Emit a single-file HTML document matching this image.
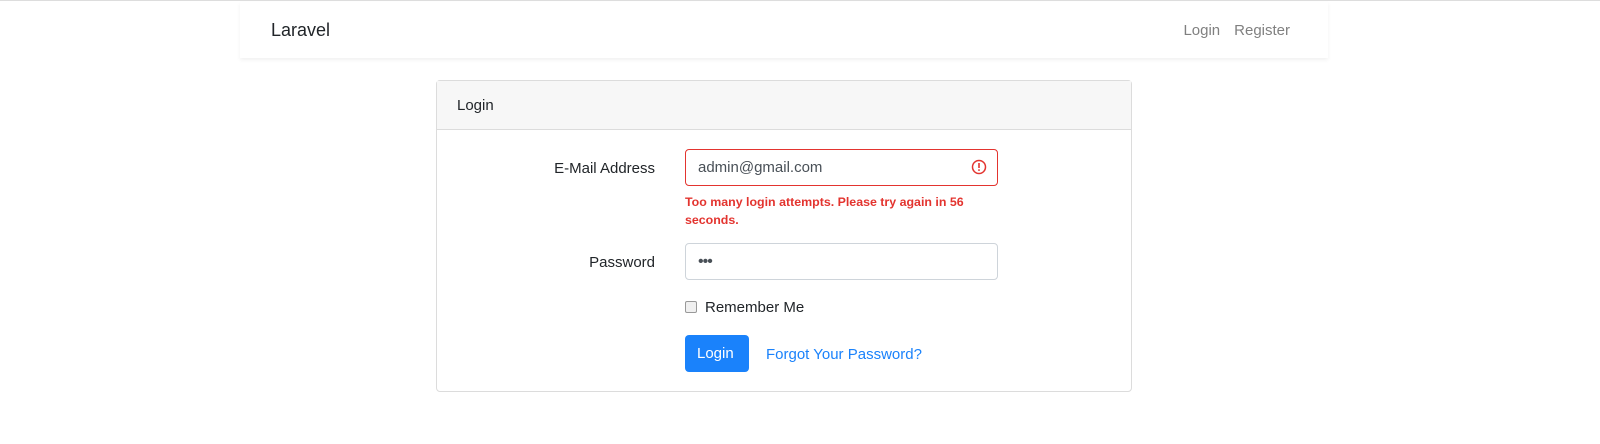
<!DOCTYPE html>
<html><head><style>
*{box-sizing:border-box;margin:0;padding:0}
body{width:1600px;height:444px;background:#fff;font-family:"Liberation Sans",sans-serif;color:#212529;position:relative;overflow:hidden;border-top:1px solid #ddd}
.nav{position:absolute;left:240px;top:1px;width:1088px;height:56px;background:#fff;box-shadow:0 2px 4px rgba(0,0,0,.06)}
.brand{position:absolute;left:31px;top:18px;font-size:18px;color:#212529}
.links{position:absolute;right:38px;top:20px;font-size:15px;color:#808080}
.links span{margin-left:14px}
.card{position:absolute;left:436px;top:79px;width:696px;height:312px;border:1px solid #dcdcdc;border-radius:4px}
.ch{height:49px;background:#f7f7f7;border-bottom:1px solid #dcdcdc;padding:16px 20px;font-size:15px}
.lbl{position:absolute;right:476px;font-size:15px;text-align:right}
.inp{position:absolute;left:248px;width:313px;height:37px;border:1px solid #ced4da;border-radius:4px;padding:9px 12px 0;font-size:15px;color:#495057}
.err{border-color:#e3342f}
.msg{position:absolute;left:248px;top:112px;width:300px;font-size:12.4px;font-weight:bold;color:#e3342f;line-height:18px}
.btn{position:absolute;left:248px;top:254px;width:64px;height:37px;background:#1a82fb;border-radius:4px;color:#fff;font-size:15px;padding:10px 12px 0}
</style></head><body>
<div class="nav"><div class="brand">Laravel</div><div class="links"><span>Login</span><span>Register</span></div></div>
<div class="card">
<div class="ch">Login</div>
<div class="lbl" style="top:79px">E-Mail Address</div>
<div class="inp err" style="top:68px">admin@gmail.com
<svg width="16" height="16" viewBox="0 0 16 16" style="position:absolute;right:10px;top:9px"><circle cx="8" cy="8" r="6.5" fill="none" stroke="#e3342f" stroke-width="1.5"/><rect x="7.2" y="4" width="1.6" height="5" fill="#e3342f"/><rect x="7.2" y="10.3" width="1.6" height="1.6" fill="#e3342f"/></svg></div>
<div class="msg">Too many login attempts. Please try again in 56 seconds.</div>
<div class="lbl" style="top:173px">Password</div>
<div class="inp" style="top:162px;font-size:16px;letter-spacing:-1px">•••</div>
<div style="position:absolute;left:248px;top:220px;width:12px;height:12px;border:1px solid #999;border-radius:2px;background:#f0f0f0"></div>
<div style="position:absolute;left:268px;top:218px;font-size:15px">Remember Me</div>
<div class="btn">Login</div>
<div style="position:absolute;left:329px;top:265px;font-size:15px;color:#1a82fb">Forgot Your Password?</div>
</div>
</body></html>
